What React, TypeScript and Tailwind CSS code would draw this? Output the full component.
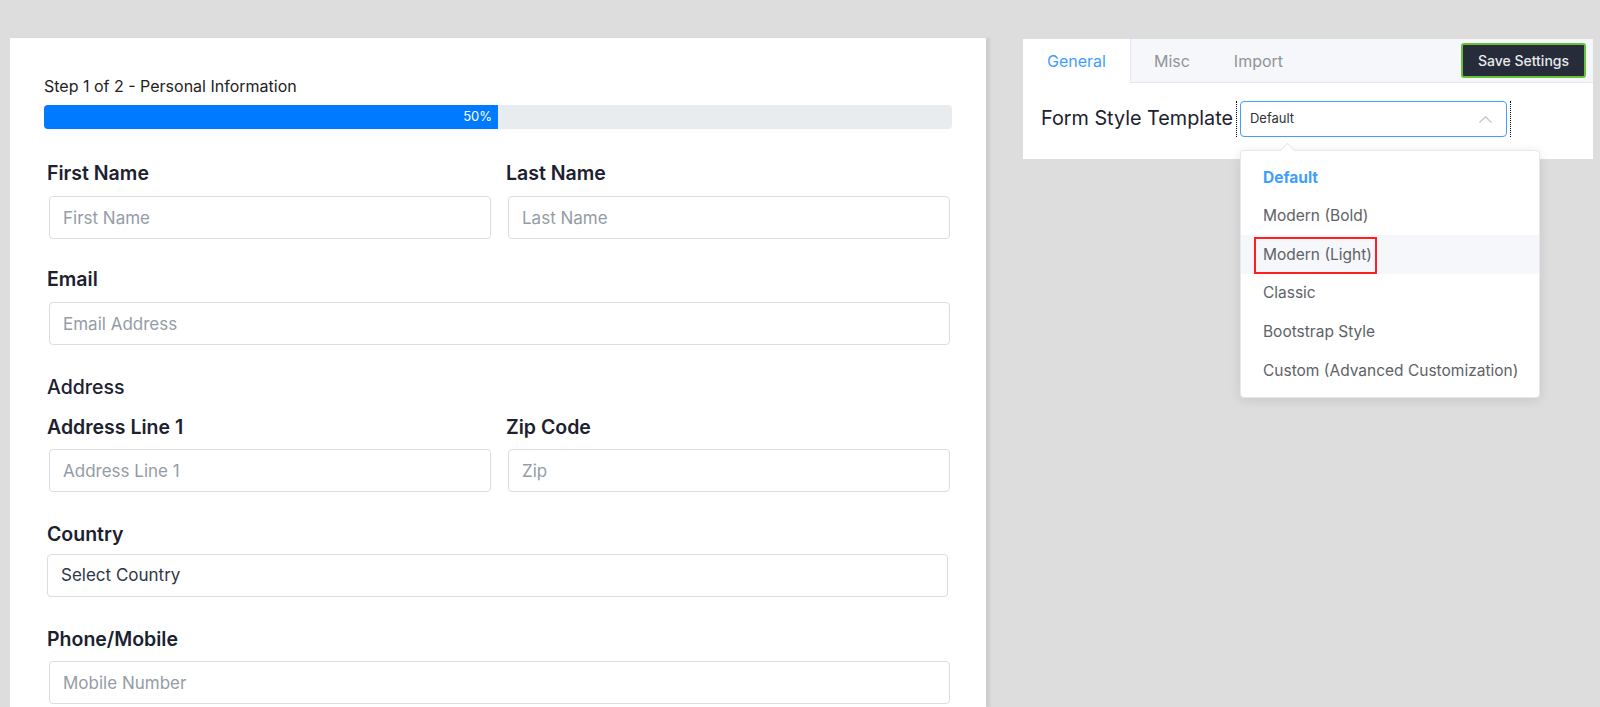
const options = [
  'Default',
  'Modern (Bold)',
  'Modern (Light)',
  'Classic',
  'Bootstrap Style',
  'Custom (Advanced Customization)',
];

function Field({ label, placeholder }: { label: string; placeholder: string }) {
  return (
    <div className="flex flex-col">
      <label className="-ml-0.5 text-[19.5px] leading-6 font-semibold text-[#1c2130]">{label}</label>
      <input
        placeholder={placeholder}
        className="mt-[11px] h-[43px] w-full rounded-[4px] border border-[#d9dee4] bg-white px-[13px] text-[17px] text-[#2d3748] outline-none placeholder:text-[#949ca6]"
      />
    </div>
  );
}

function FormCard() {
  return (
    <div className="h-[669px] w-[976px] shrink-0 overflow-hidden bg-white px-[34px] pt-[38px] shadow-[4px_0_2px_rgba(0,0,0,0.07)]">
      <p className="text-[16px] leading-5 text-[#222]">Step 1 of 2 - Personal Information</p>
      <div className="mt-[9px] h-6 w-full overflow-hidden rounded-[4px] bg-[#e9ecef]">
        <div className="flex h-full w-1/2 items-center justify-end bg-[#007bff] pr-[6px] text-[13px] text-white">
          50%
        </div>
      </div>

      <div className="ml-[5px] w-[901px]">
        <div className="mt-[32px] grid grid-cols-2 gap-x-[17px]">
          <Field label="First Name" placeholder="First Name" />
          <Field label="Last Name" placeholder="Last Name" />
        </div>

        <div className="mt-[28px]">
          <Field label="Email" placeholder="Email Address" />
        </div>

        <p className="-ml-0.5 mt-[30px] text-[19.5px] leading-6 font-medium text-[#1c2130]">Address</p>
        <div className="mt-[16px] grid grid-cols-2 gap-x-[17px] [&_input]:mt-[10px]">
          <Field label="Address Line 1" placeholder="Address Line 1" />
          <Field label="Zip Code" placeholder="Zip" />
        </div>

        <div className="mt-[30px] flex flex-col">
          <label className="-ml-0.5 text-[19.5px] leading-6 font-semibold text-[#1c2130]">Country</label>
          <select className="-ml-0.5 mt-[8px] h-[43px] w-[901px] appearance-none rounded-[4px] border border-[#d9dee4] bg-white px-[13px] text-[17px] text-[#2d3748] outline-none">
            <option>Select Country</option>
          </select>
        </div>

        <div className="mt-[30px] [&_input]:mt-[10px]">
          <Field label="Phone/Mobile" placeholder="Mobile Number" />
        </div>
      </div>
    </div>
  );
}

function SettingsPanel() {
  return (
    <div className="ml-[37px] mt-px w-[570px] shrink-0 self-start bg-white">
      <div className="flex h-11 items-center border-b border-[#e4e7ed] bg-[#f5f7fa] pr-[7px]">
        <div className="-mb-px flex h-11 items-center border-r border-[#e4e7ed] bg-white px-6 text-[16px] text-[#409eff]">
          General
        </div>
        <div className="flex h-11 items-center pl-[23px] pr-6 text-[16px] text-[#909399]">Misc</div>
        <div className="flex h-11 items-center px-5 text-[16px] text-[#909399]">Import</div>
        <button className="ml-auto h-[35px] w-[125px] rounded-[3px] border-2 border-[#67c23a] bg-[#262c3a] text-[14px] font-medium text-[#e8eaee]">
          Save Settings
        </button>
      </div>

      <div className="flex items-center pb-[22px] pl-[18px] pt-[18px]">
        <span className="whitespace-nowrap text-[19.8px] text-[#1c2130]">Form Style Template</span>
        <div className="relative ml-[3px] border-x border-dotted border-black px-[3px]">
          <div className="flex h-9 w-[267px] items-center justify-between rounded-[4px] border border-[#409eff] bg-white pl-[9px] pr-[14px]">
            <span className="text-[13px] text-[#303133]">Default</span>
            <svg width="13" height="7" viewBox="0 0 13 7" fill="none" className="mt-px">
              <polyline points="0.5,6.5 6.5,0.8 12.5,6.5" stroke="#c0c4cc" strokeWidth="1.2" />
            </svg>
          </div>

          <div className="absolute left-[3px] top-[calc(100%+13px)] z-10 w-[300px] rounded-[4px] border border-[#e4e7ed] bg-white pb-[7px] pt-[7px] shadow-[0_2px_12px_rgba(0,0,0,0.1)]">
            <div className="absolute -top-[6px] left-[41px] h-[11px] w-[11px] rotate-45 border-l border-t border-[#e4e7ed] bg-white" />
            {options.map((o, i) => (
              <div
                key={o}
                className={
                  'relative flex h-[38.6px] items-center whitespace-nowrap px-[22px] text-[15.5px] ' +
                  (i === 0
                    ? 'font-bold text-[#409eff]'
                    : i === 2
                      ? 'bg-[#f5f7fa] text-[#606266]'
                      : 'text-[#606266]')
                }
              >
                {o}
                {i === 2 && (
                  <span className="absolute left-[13px] top-[2px] h-[37px] w-[123px] border-2 border-[#ff1f1f]" />
                )}
              </div>
            ))}
          </div>
        </div>
      </div>
    </div>
  );
}

export default function App() {
  return (
    <div className="h-[707px] w-[1600px] overflow-hidden bg-[#dddddd] font-['Inter',sans-serif]">
      <div className="flex pl-[10px] pt-[38px]">
        <FormCard />
        <SettingsPanel />
      </div>
    </div>
  );
}
